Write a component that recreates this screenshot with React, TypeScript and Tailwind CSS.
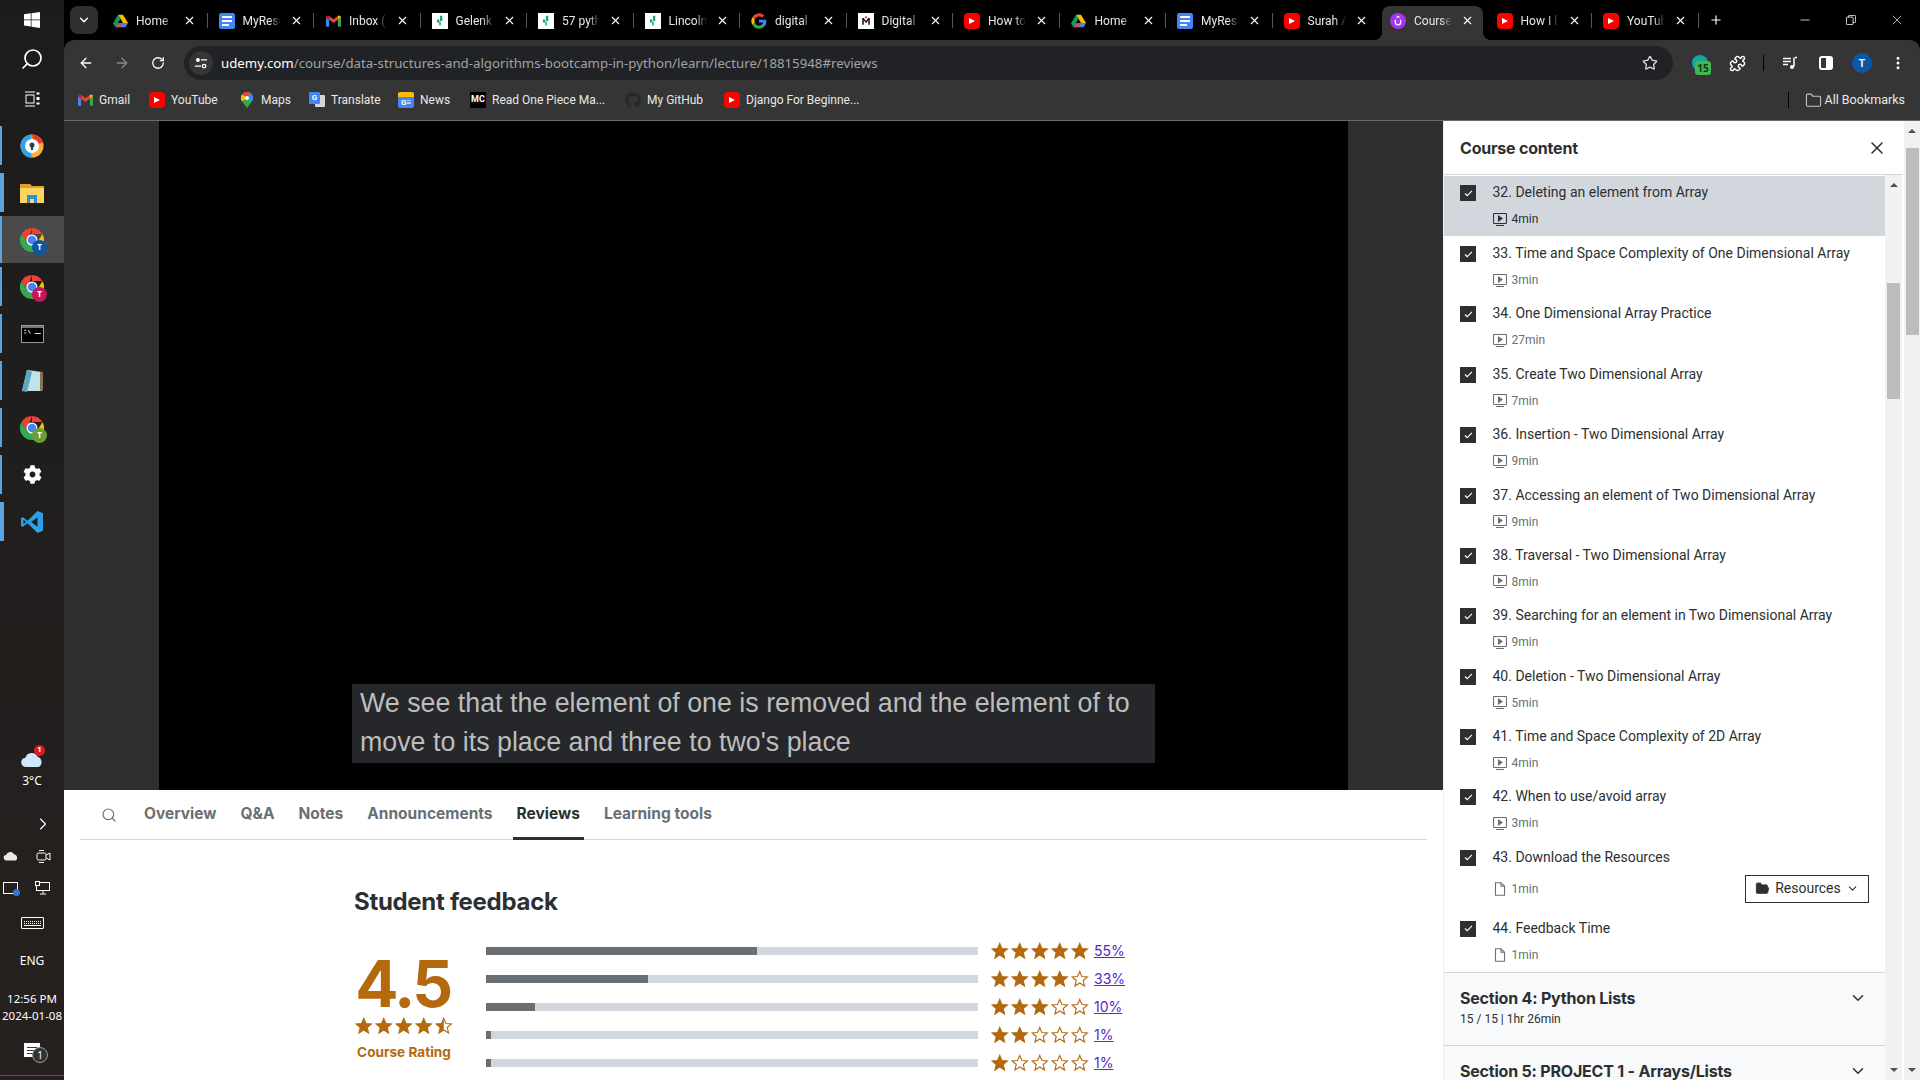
import { ArrowLeft, ArrowRight, ChevronDown, ChevronRight, EllipsisVertical, Folder, FolderOpen, Minus, Plus, Puzzle, RotateCw, Search, Star, X } from 'lucide-react';
import { FaCog, FaGithub } from 'react-icons/fa';

const DriveIcon = () => (
  <svg viewBox="0 0 24 22" className="h-[14px] w-[15px]">
    <path d="M8 1h8l8 13h-8z" fill="#fbbc04" />
    <path d="M8 1 0 15l4 6 8-14z" fill="#0f9d58" />
    <path d="M4 21h16l4-7H8z" fill="#4285f4" />
    <path d="M4 21l4-7h8l-4 7z" fill="#ea4335" opacity="0.8" />
  </svg>
);

const DocsIcon = () => (
  <div className="flex h-[16px] w-[16px] flex-col justify-center gap-[2px] rounded-[2px] bg-[#4285f4] px-[3px]">
    <div className="h-[2px] bg-white" />
    <div className="h-[2px] bg-white" />
    <div className="h-[2px] w-[7px] bg-white" />
  </div>
);

const GmailIcon = () => (
  <svg viewBox="0 0 24 18" className="h-[12px] w-[15px]">
    <path d="M0 3v13a2 2 0 0 0 2 2h3V7z" fill="#4285f4" />
    <path d="M24 3v13a2 2 0 0 1-2 2h-3V7z" fill="#34a853" />
    <path d="M5 7 12 12l7-5V1l-7 5-7-5z" fill="#ea4335" />
    <path d="M0 3a3 3 0 0 1 5-2v6L0 3z" fill="#c5221f" />
    <path d="M24 3a3 3 0 0 0-5-2v6l5-4z" fill="#fbbc04" />
  </svg>
);

const SheetIcon = () => (
  <div className="flex h-[16px] w-[16px] items-center justify-center bg-white">
    <svg viewBox="0 0 16 16" className="h-[12px] w-[12px]">
      <path d="M8 1h3v7H8zM4 6h3v4H4zM7 9h2v5H7z" fill="#10a37f" />
    </svg>
  </div>
);

const GoogleIcon = () => (
  <svg viewBox="0 0 24 24" className="h-[16px] w-[16px]">
    <path d="M23 12.3c0-.8-.1-1.6-.2-2.3H12v4.4h6.2a5.3 5.3 0 0 1-2.3 3.4v2.9h3.7c2.2-2 3.4-5 3.4-8.4z" fill="#4285f4" />
    <path d="M12 23.5c3.1 0 5.700-1 7.600-2.800l-3.700-2.900c-1 .7-2.300 1.100-3.900 1.100-3 0-5.500-2-6.400-4.700H1.800v3a11.500 11.500 0 0 0 10.200 6.300z" fill="#34a853" />
    <path d="M5.600 14.200a7 7 0 0 1 0-4.400v-3H1.800a11.500 11.500 0 0 0 0 10.400z" fill="#fbbc04" />
    <path d="M12 5.100c1.700 0 3.200.6 4.400 1.700l3.300-3.300A11.500 11.500 0 0 0 1.800 6.800l3.800 3C6.500 7.100 9 5.100 12 5.100z" fill="#ea4335" />
  </svg>
);

const DigitalIcon = () => (
  <div className="flex h-[16px] w-[16px] items-center justify-center bg-white">
    <svg viewBox="0 0 16 16" className="h-[12px] w-[12px]">
      <path d="M3 4h2l3 4 3-4h2v9h-2V7L8 11 5 7v6H3z" fill="#111" />
      <circle cx="8" cy="3" r="1.500" fill="#d33" />
    </svg>
  </div>
);

const YoutubeIcon = () => (
  <div className="flex h-[16px] w-[16px] items-center justify-center rounded-[4px] bg-[#ff0000]">
    <div className="h-0 w-0 border-y-[3.500px] border-l-[6px] border-y-transparent border-l-white" />
  </div>
);

const UdemyIcon = () => (
  <div className="flex h-[16px] w-[16px] items-center justify-center rounded-full bg-[#a435f0]">
    <svg viewBox="0 0 16 16" className="h-[14px] w-[14px]">
      <path d="M5 6.500v3a3 3 0 0 0 6 0v-3" fill="none" stroke="white" strokeWidth="1.500" />
      <path d="M8 2 11 4H5z" fill="white" />
    </svg>
  </div>
);

type BrowserTab = { icon: React.ReactNode; title: string; active?: boolean };

const tabs: BrowserTab[] = [
  { icon: <DriveIcon />, title: 'Home' },
  { icon: <DocsIcon />, title: 'MyResume' },
  { icon: <GmailIcon />, title: 'Inbox (1' },
  { icon: <SheetIcon />, title: 'Gelenk' },
  { icon: <SheetIcon />, title: '57 python' },
  { icon: <SheetIcon />, title: 'Lincoln' },
  { icon: <GoogleIcon />, title: 'digital' },
  { icon: <DigitalIcon />, title: 'Digital' },
  { icon: <YoutubeIcon />, title: 'How to' },
  { icon: <DriveIcon />, title: 'Home' },
  { icon: <DocsIcon />, title: 'MyResume' },
  { icon: <YoutubeIcon />, title: 'Surah A' },
  { icon: <UdemyIcon />, title: 'Course', active: true },
  { icon: <YoutubeIcon />, title: 'How I l' },
  { icon: <YoutubeIcon />, title: 'YouTube' },
];

const TabStrip = () => (
  <div className="flex h-[40px] items-stretch bg-black font-['Roboto',sans-serif] text-[12px] text-[#e8e8e8]">
    <div className="ml-[6px] mr-[3px] mt-[6px] flex h-[28px] w-[28px] items-center justify-center rounded-[8px] bg-[#2f2f2f]">
      <ChevronDown size={14} strokeWidth={2.5} className="text-white" />
    </div>
    {tabs.map((tab, i) => (
      <div key={i} className="relative flex w-[106.5px] items-center pl-[11px] pt-[1px]">
        {tab.active && (
          <>
            <div className="absolute inset-x-[3px] bottom-0 top-[6px] rounded-t-[8px] bg-[#353535]" />
            <div className="absolute bottom-0 left-[-5px] h-[8px] w-[8px] bg-[radial-gradient(circle_at_0_0,#000_8px,#353535_8px)]" />
            <div className="absolute bottom-0 right-[-5px] h-[8px] w-[8px] bg-[radial-gradient(circle_at_100%_0,#000_8px,#353535_8px)]" />
          </>
        )}
        <div className="relative flex w-[16px] justify-center">{tab.icon}</div>
        <div className="relative ml-[8px] w-[38px] overflow-hidden whitespace-nowrap [mask-image:linear-gradient(to_right,black_70%,transparent)]">
          {tab.title}
        </div>
        <X size={13} strokeWidth={2} className="relative ml-[9px] text-white" />
        {!tab.active && i !== 11 && (
          <div className="absolute right-0 top-[13px] h-[15px] w-px bg-[#555]" />
        )}
      </div>
    ))}
    <div className="ml-[10px] flex items-center">
      <Plus size={14} strokeWidth={2} className="text-white" />
    </div>
    <div className="ml-auto flex">
      <div className="flex w-[46px] items-center justify-center">
        <Minus size={14} strokeWidth={1.3} className="text-white" />
      </div>
      <div className="flex w-[46px] items-center justify-center">
        <svg viewBox="0 0 12 12" className="h-[10px] w-[10px]" fill="none" stroke="white" strokeWidth="1">
          <rect x="0.500" y="2.500" width="8" height="9" rx="1" />
          <path d="M3 2.500V1.500a1 1 0 0 1 1-1h6.500a1 1 0 0 1 1 1V8a1 1 0 0 1-1 1H8.500" />
        </svg>
      </div>
      <div className="flex w-[46px] items-center justify-center">
        <X size={16} strokeWidth={1} className="text-white" />
      </div>
    </div>
  </div>
);

const Toolbar = () => (
  <div className="flex h-[40px] items-center rounded-t-[10px] bg-[#353535] pl-[4px] pt-[6px]">
    <div className="flex w-[36px] justify-center">
      <ArrowLeft size={16} strokeWidth={2} className="text-white" />
    </div>
    <div className="flex w-[36px] justify-center">
      <ArrowRight size={16} strokeWidth={2} className="text-[#8a8a8a]" />
    </div>
    <div className="flex w-[36px] justify-center">
      <RotateCw size={14} strokeWidth={2.2} className="text-white" />
    </div>
    <div className="relative ml-[8px] flex h-[34px] w-[1489px] items-center rounded-full bg-[#212225] pl-[5px] font-['Noto_Sans',sans-serif] text-[13.250px]">
      <div className="flex h-[24px] w-[24px] items-center justify-center rounded-full bg-[#353535]">
        <svg viewBox="0 0 16 16" className="h-[14px] w-[14px]" fill="none" stroke="white" strokeWidth="1.500">
          <circle cx="4.500" cy="4.500" r="1.500" fill="white" />
          <path d="M8 4.500h7M1 11.500h7" />
          <circle cx="11.500" cy="11.500" r="2" />
        </svg>
      </div>
      <span className="ml-[8px] mt-px text-white">udemy.com</span>
      <span className="mt-px text-[#a0a3a7]">/course/data-structures-and-algorithms-bootcamp-in-python/learn/lecture/18815948#reviews</span>
      <Star size={16} strokeWidth={2} className="absolute right-[15px] text-[#dadada]" />
    </div>
    <div className="ml-[9px] flex w-[36px] justify-center">
      <div className="relative h-[16px] w-[16px] rounded-full bg-[#13a89e]">
        <div className="absolute left-[3px] top-[6px] flex h-[14px] w-[16px] items-center justify-center rounded-[3px] bg-[#3fb950] font-['Noto_Sans',sans-serif] text-[10px] font-bold text-[#12361a]">15</div>
      </div>
    </div>
    <div className="ml-px flex w-[36px] justify-center">
      <Puzzle size={17} strokeWidth={2} className="text-white" />
    </div>
    <div className="ml-[8px] mr-[8px] h-[16px] w-[1px] bg-black" />
    <div className="flex w-[36px] justify-center">
      <svg viewBox="0 0 16 16" className="h-[16px] w-[16px]" fill="none" stroke="white" strokeWidth="1.500">
        <path d="M1 3.500h8M1 6.500h8M1 9.500h5" />
        <path d="M13 2.500h2M12 2.500v9" />
        <circle cx="10" cy="12" r="2" fill="white" stroke="none" />
      </svg>
    </div>
    <div className="flex w-[36px] justify-center">
      <div className="flex h-[14px] w-[14px] justify-end rounded-[3px] border-[2px] border-white">
        <div className="h-full w-[5px] bg-white" />
      </div>
    </div>
    <div className="flex w-[36px] justify-center">
      <div className="flex h-[20px] w-[20px] items-center justify-center rounded-full bg-[#0b57a4] font-['Noto_Sans',sans-serif] text-[11px] font-semibold text-white">T</div>
    </div>
    <div className="flex w-[36px] justify-center">
      <EllipsisVertical size={16} strokeWidth={2.5} className="text-white" />
    </div>
  </div>
);

const MapsIcon = () => (
  <svg viewBox="0 0 12 16" className="h-[16px] w-[12px]">
    <path d="M6 0a6 6 0 0 0-5 9.300L6 16l5-6.700A6 6 0 0 0 6 0z" fill="#34a853" />
    <path d="M6 0a6 6 0 0 1 5 9.300L6 6z" fill="#4285f4" />
    <path d="M1 2.500 6 6 1 9.300a6 6 0 0 1 0-6.800z" fill="#fbbc04" />
    <path d="M1.800 1.700A6 6 0 0 1 9 .8L6 6z" fill="#ea4335" />
    <circle cx="6" cy="6" r="2" fill="#fff" />
  </svg>
);

const TranslateIcon = () => (
  <div className="relative h-[16px] w-[16px]">
    <div className="absolute right-0 top-[3px] h-[12px] w-[10px] rounded-[1px] bg-[#d6d6d6]" />
    <div className="absolute left-0 top-0 flex h-[12px] w-[11px] items-center justify-center rounded-[1px] bg-[#4285f4] text-[8px] font-bold text-white">G</div>
  </div>
);

const NewsIcon = () => (
  <div className="flex h-[16px] w-[16px] flex-col overflow-hidden rounded-[2px]">
    <div className="h-[5px] bg-[#fbbc04]" />
    <div className="flex flex-1 items-center justify-center bg-[#4285f4] text-[8px] font-bold leading-none text-white">G≡</div>
  </div>
);

const McIcon = () => (
  <div className="flex h-[16px] w-[16px] items-center justify-center bg-black text-[9px] font-bold text-white">MC</div>
);

const bookmarks: { icon: React.ReactNode; label: string; width: string }[] = [
  { icon: <GmailIcon />, label: 'Gmail', width: 'w-[72px]' },
  { icon: <YoutubeIcon />, label: 'YouTube', width: 'w-[90px]' },
  { icon: <MapsIcon />, label: 'Maps', width: 'w-[70px]' },
  { icon: <TranslateIcon />, label: 'Translate', width: 'w-[89px]' },
  { icon: <NewsIcon />, label: 'News', width: 'w-[72px]' },
  { icon: <McIcon />, label: 'Read One Piece Ma...', width: 'w-[155px]' },
  { icon: <FaGithub size={16} className="text-[#25282b]" />, label: 'My GitHub', width: 'w-[99px]' },
  { icon: <YoutubeIcon />, label: 'Django For Beginne...', width: 'w-[140px]' },
];

const BookmarksBar = () => (
  <div className="flex h-[40px] items-center bg-[#353535] pl-[13px] font-['Roboto',sans-serif] text-[12px] text-[#e8e8e8]">
    {bookmarks.map((b) => (
      <div key={b.label} className={`flex shrink-0 items-center gap-[6px] ${b.width}`}>
        <div className="flex w-[16px] justify-center">{b.icon}</div>
        <span className="whitespace-nowrap">{b.label}</span>
      </div>
    ))}
    <div className="ml-auto mr-[15px] flex items-center">
      <div className="mr-[16px] h-[16px] w-[1px] bg-black" />
      <Folder size={17} strokeWidth={1.5} className="mr-[3px] text-[#c8c8c8]" />
      <span className="text-[12.500px]">All Bookmarks</span>
    </div>
  </div>
);

const ChromeIcon = ({ badge }: { badge: string }) => (
  <div className="relative h-[24px] w-[24px]">
    <svg viewBox="0 0 24 24" className="h-[24px] w-[24px]">
      <path d="M12 0a12 12 0 0 1 10.400 6H12z" fill="#ea4335" />
      <path d="M12 0A12 12 0 0 0 1.600 6L7 15z" fill="#ea4335" />
      <path d="M22.400 6A12 12 0 0 1 12 24l5-9z" fill="#fbbc04" />
      <path d="M1.600 6A12 12 0 0 0 12 24l5-9H7z" fill="#34a853" />
      <circle cx="12" cy="12" r="5.500" fill="#fff" />
      <circle cx="12" cy="12" r="4.300" fill="#4285f4" />
    </svg>
    <div
      className="absolute -bottom-[3px] -right-[3px] flex h-[15px] w-[15px] items-center justify-center rounded-full font-['Noto_Sans',sans-serif] text-[8px] font-bold text-white"
      style={{ backgroundColor: badge }}
    >
      T
    </div>
  </div>
);

const AvastIcon = () => (
  <svg viewBox="0 0 24 24" className="h-[24px] w-[24px]">
    <circle cx="12" cy="12" r="11.500" fill="#f9b233" />
    <path d="M12 .5a11.500 11.500 0 0 1 11 8L14 11z" fill="#e8352e" />
    <path d="M.5 12A11.500 11.500 0 0 1 12 .5L9 12l3 11.500A11.500 11.500 0 0 1 .5 12z" fill="#2aa3e8" />
    <circle cx="12" cy="12" r="7" fill="#fff" />
    <circle cx="12" cy="11" r="2.500" fill="#2b3a55" />
    <path d="M11 12h2v4h-2z" fill="#2b3a55" />
  </svg>
);

const FolderIcon = () => (
  <svg viewBox="0 0 24 20" className="h-[20px] w-[24px]">
    <path d="M0 1h10l2 2h12v2H0z" fill="#e2a21d" />
    <path d="M0 5h24v15H0z" fill="#fcd462" />
    <path d="M7 12h10v8h-3v-4h-4v4H7z" fill="#2e8cd8" />
  </svg>
);

const CmdIcon = () => (
  <div className="h-[18px] w-[23px] border border-[#9a9a9a] bg-black">
    <div className="h-[2px] bg-[#777]" />
    <svg viewBox="0 0 20 12" className="h-[13px] w-[21px]" fill="none" stroke="#ddd" strokeWidth="1">
      <path d="M2 2h2M2 4.500h2M6 2l2 3M12 5h6" />
    </svg>
  </div>
);

const NotepadIcon = () => (
  <svg viewBox="0 0 24 24" className="h-[24px] w-[24px]">
    <path d="M7 1 22 3v19H2z" fill="#bfe3ea" />
    <path d="M7 1 2 22l5 1 5-20z" fill="#5ea7c4" />
    <path d="M20 3h3v18l-3 1z" fill="#8a7350" />
  </svg>
);

const VscodeIcon = () => (
  <svg viewBox="0 0 24 24" className="h-[24px] w-[24px]">
    <path d="M17.500 1 7.500 10.700 3 7.300 1 8.300v7.400l2 1 4.500-3.400L17.500 23 23 20.800V3.200zM17.500 7.300v9.400L11.300 12z M3.500 9.700 6 12l-2.500 2.300z" fill="#2d9fe6" fillRule="evenodd" />
  </svg>
);

const WindowsIcon = () => (
  <svg viewBox="0 0 16 16" className="h-[16px] w-[16px]" fill="white">
    <path d="M0 2.300 6.800 1.300v6.200H0zM7.500 1.200 16 0v7.500H7.500zM0 8.200h6.800v6.300L0 13.600zM7.500 8.200H16V16l-8.500-1.200z" />
  </svg>
);

const TaskViewIcon = () => (
  <svg viewBox="0 0 16 16" className="h-[16px] w-[16px]" fill="none" stroke="white" strokeWidth="1">
    <path d="M1 1h10M1 15h10" />
    <rect x="2" y="4" width="8" height="8" />
    <rect x="13" y="2" width="2" height="1" />
    <rect x="13" y="6.500" width="2" height="2" fill="white" />
    <rect x="13" y="12" width="2" height="1" />
  </svg>
);

const apps: { icon: React.ReactNode; indicator: string; active?: boolean }[] = [
  { icon: <AvastIcon />, indicator: 'w-[2px]' },
  { icon: <FolderIcon />, indicator: 'w-[4px]' },
  { icon: <ChromeIcon badge="#0b57a4" />, indicator: 'w-[2px]', active: true },
  { icon: <ChromeIcon badge="#c2185b" />, indicator: 'w-[2px]' },
  { icon: <CmdIcon />, indicator: 'w-[2px]' },
  { icon: <NotepadIcon />, indicator: 'w-[2px]' },
  { icon: <ChromeIcon badge="#689f38" />, indicator: 'w-[2px]' },
  { icon: <FaCog size={19} className="text-white" />, indicator: 'w-[2px]' },
  { icon: <VscodeIcon />, indicator: 'w-[4px]' },
];

const Taskbar = () => (
  <aside className="flex h-full w-[64px] shrink-0 flex-col bg-gradient-to-b from-[#1c1c1c] to-[#26211f] font-['Noto_Sans',sans-serif] text-[12px] text-white">
    <div className="flex h-[40px] items-center justify-center">
      <WindowsIcon />
    </div>
    <div className="flex h-[38px] items-center justify-center">
      <Search size={24} strokeWidth={1.7} className="-scale-x-100 text-white" />
    </div>
    <div className="mb-[3px] flex h-[41px] items-center justify-center">
      <TaskViewIcon />
    </div>
    {apps.map((app, i) => (
      <div key={i} className={`relative flex h-[47px] items-center justify-center ${app.active ? 'bg-[#4a4a4a]' : ''}`}>
        <div className={`absolute left-0 bg-[#5ba4e0] ${app.indicator} ${app.active ? 'inset-y-0' : 'inset-y-[4px]'}`} />
        {app.icon}
      </div>
    ))}
    <div className="mt-auto flex flex-col items-center">
      <div className="relative flex h-[20px] w-[24px] items-end justify-center">
        <svg viewBox="0 0 24 16" className="h-[15px] w-[24px]">
          <path d="M6 16a5 5 0 0 1-1-10 7 7 0 0 1 13-1 6 6 0 0 1 1 11z" fill="#cfe6fb" />
        </svg>
        <div className="absolute -right-[1px] -top-[2px] flex h-[11px] w-[11px] items-center justify-center rounded-full bg-[#d32020] text-[7.500px] font-bold">1</div>
      </div>
      <div className="mt-[5px] leading-[18px]">3°C</div>
      <div className="mt-[24px] flex w-full justify-end pr-[11px]">
        <ChevronRight size={20} strokeWidth={1.3} className="text-white" />
      </div>
      <div className="mt-[14px] flex w-full items-center justify-between px-[3px]">
        <svg viewBox="0 0 18 10" className="h-[10px] w-[16px]" fill="#e8e8e8">
          <path d="M4 10a3 3 0 0 1-.500-6 5 5 0 0 1 9-1 4 4 0 0 1 2 7z" />
        </svg>
        <svg viewBox="0 0 16 16" className="mr-[10px] h-[16px] w-[16px]" fill="none" stroke="white" strokeWidth="1">
          <rect x="2" y="5" width="9" height="7" rx="1.500" />
          <path d="M11 7l4-2v7l-4-2M4 2.500h5M4 14.500h5" />
        </svg>
      </div>
      <div className="mt-[17px] flex w-full items-center justify-between pl-[3px] pr-[13px]">
        <div className="relative h-[12px] w-[15px] border border-white">
          <div className="absolute -bottom-[3px] -right-[3px] h-[7px] w-[7px] rounded-full bg-[#2a7bd3]" />
        </div>
        <svg viewBox="0 0 16 14" className="h-[14px] w-[16px]" fill="none" stroke="white" strokeWidth="1">
          <rect x="1.500" y="1.500" width="13" height="8" />
          <rect x="0.500" y="0.500" width="4" height="4" fill="#222" />
          <path d="M8 9.500v3M5 13h6" />
        </svg>
      </div>
      <div className="mt-[22.500px] flex h-[12px] w-[23px] flex-col justify-center gap-[1px] rounded-[1px] border border-white px-[2px]">
        <div className="h-px border-t border-dotted border-white" />
        <div className="h-px border-t border-dotted border-white" />
        <div className="h-px bg-white" />
      </div>
      <div className="mt-[22.500px] leading-[18px]">ENG</div>
      <div className="mt-[20.500px] whitespace-nowrap text-center text-[11.500px] leading-[17px]">
        12:56 PM
        <br />
        2024-01-08
      </div>
      <div className="relative mb-[18px] mt-[19px] flex h-[14px] w-[16px] flex-col justify-center gap-[2px] bg-white px-[3px]">
        <div className="h-px bg-[#333]" />
        <div className="h-px bg-[#333]" />
        <div className="h-px w-[6px] bg-[#333]" />
        <div className="absolute -bottom-[6px] -right-[8px] flex h-[16px] w-[16px] items-center justify-center rounded-full border border-[#999] bg-[#333] text-[10px]">1</div>
      </div>
      <div className="mb-[4px] h-px w-full bg-[#555]" />
    </div>
  </aside>
);

const VideoIcon = ({ dark }: { dark: boolean }) => (
  <svg viewBox="0 0 14 13" className={`h-[13px] w-[14px] ${dark ? 'text-[#2d2f31]' : 'text-[#6a6f73]'}`} fill="none" stroke="currentColor" strokeWidth="1.100">
    <rect x="0.500" y="0.500" width="13" height="10" rx="1" />
    <path d="M3 12.500h8" />
    <path d="M5.500 3v5l3.500-2.500z" fill="currentColor" />
  </svg>
);

const FileIcon = () => (
  <svg viewBox="0 0 12 14" className="h-[14px] w-[12px] text-[#6a6f73]" fill="none" stroke="currentColor" strokeWidth="1.100">
    <path d="M1.500.8h5.500l3.500 3.500v8.900h-9z" />
    <path d="M7 .8v3.500h3.500" />
  </svg>
);

type Lecture = { title: string; time: string; file?: boolean; selected?: boolean; resources?: boolean };

const lectures: Lecture[] = [
  { title: '32. Deleting an element from Array', time: '4min', selected: true },
  { title: '33. Time and Space Complexity of One Dimensional Array', time: '3min' },
  { title: '34. One Dimensional Array Practice', time: '27min' },
  { title: '35. Create Two Dimensional Array', time: '7min' },
  { title: '36. Insertion - Two Dimensional Array', time: '9min' },
  { title: '37. Accessing an element of Two Dimensional Array', time: '9min' },
  { title: '38. Traversal - Two Dimensional Array', time: '8min' },
  { title: '39. Searching for an element in Two Dimensional Array', time: '9min' },
  { title: '40. Deletion - Two Dimensional Array', time: '5min' },
  { title: '41. Time and Space Complexity of 2D Array', time: '4min' },
  { title: '42. When to use/avoid array', time: '3min' },
  { title: '43. Download the Resources', time: '1min', file: true, resources: true },
  { title: '44. Feedback Time', time: '1min', file: true },
];

const LectureRow = ({ lecture }: { lecture: Lecture }) => (
  <div className={`flex shrink-0 pl-[16px] ${lecture.resources ? 'h-[71px]' : lecture.selected ? 'mb-px h-[60px] bg-[#d1d7dc]' : 'h-[60.380px]'}`}>
    <div className="mt-[9px] flex h-[16px] w-[16px] shrink-0 items-center justify-center bg-[#2d2f31]">
      <svg viewBox="0 0 10 8" className="h-[7px] w-[9px]" fill="none" stroke="white" strokeWidth="1.300">
        <path d="M1 4l2.500 2.500L9 1" />
      </svg>
    </div>
    <div className="ml-[16.500px] flex-1 pt-[6px] font-['Roboto',sans-serif]">
      <div className="text-[14px] leading-[20px] text-[#2d2f31]">{lecture.title}</div>
      <div className={`flex items-center ${lecture.resources ? 'mt-[8px] h-[28px] pr-[16px]' : 'mt-[7px] h-[20px]'}`}>
        <div className="flex w-[19px] justify-start">{lecture.file ? <div className="pl-px"><FileIcon /></div> : <VideoIcon dark={!!lecture.selected} />}</div>
        <span className={`text-[12px] ${lecture.selected ? 'text-[#2d2f31]' : 'text-[#6a6f73]'}`}>{lecture.time}</span>
        {lecture.resources && (
          <div className="ml-auto flex h-[28px] w-[124px] items-center justify-center gap-[5px] border border-[#2d2f31] text-[14px] text-[#2d2f31]">
            <FolderOpen size={15} fill="#2d2f31" stroke="#2d2f31" strokeWidth={1} />
            Resources
            <ChevronDown size={13} strokeWidth={2} />
          </div>
        )}
      </div>
    </div>
  </div>
);

const SectionRow = ({ title, meta }: { title: string; meta?: string }) => (
  <div className="relative h-[73px] shrink-0 border-t border-[#d1d7dc] bg-[#f7f9fa] px-[16px] pt-[13px]">
    <div className="text-[16px] font-bold leading-[24px] tracking-[-0.2px] text-[#2d2f31]">{title}</div>
    {meta && <div className="mt-px font-['Roboto',sans-serif] text-[12px] leading-[16px] text-[#2d2f31]">{meta}</div>}
    <ChevronDown size={18} strokeWidth={2} className="absolute right-[18px] top-[16px] text-[#2d2f31]" />
  </div>
);

const ArrowUp = () => <div className="h-0 w-0 border-x-[4px] border-b-[4px] border-x-transparent border-b-[#505050]" />;
const ArrowDown = () => <div className="h-0 w-0 border-x-[4px] border-t-[4px] border-x-transparent border-t-[#505050]" />;

const Sidebar = () => (
  <div className="flex h-full w-[460px] shrink-0 flex-col border-l border-[#f0f0f0] bg-white font-['Inter',sans-serif]">
    <div className="flex h-[54px] shrink-0 items-center justify-between border-b border-[#d1d7dc] pl-[16px] pr-[16px]">
      <span className="text-[16px] font-bold tracking-[-0.2px] text-[#2d2f31]">Course content</span>
      <X size={20} strokeWidth={1.8} className="text-[#2d2f31]" />
    </div>
    <div className="flex min-h-0 flex-1">
      <div className="flex w-[441px] flex-col overflow-hidden pt-px">
        {lectures.map((l) => (
          <LectureRow key={l.title} lecture={l} />
        ))}
        <SectionRow title="Section 4: Python Lists" meta="15 / 15 | 1hr 26min" />
        <SectionRow title="Section 5: PROJECT 1 - Arrays/Lists" />
      </div>
      <div className="flex w-[17px] flex-col items-center bg-[#f1f1f1] pb-[8px] pt-[8px]">
        <ArrowUp />
        <div className="mt-[96px] h-[116px] w-[13px] bg-[#bcbcbc]" />
        <div className="mt-auto">
          <ArrowDown />
        </div>
      </div>
    </div>
  </div>
);

const OuterScrollbar = () => (
  <div className="flex w-[17px] shrink-0 flex-col items-center border-l border-white bg-[#f1f1f1] pb-[8px] pt-[8px]">
    <ArrowUp />
    <div className="mt-[15px] h-[187px] w-[13px] bg-[#bcbcbc]" />
    <div className="mt-auto">
      <ArrowDown />
    </div>
  </div>
);

const StarIcon = ({ kind }: { kind: 'full' | 'half' | 'empty' }) => {
  const points = '12,2 15,9 22.500,9.600 16.800,14.400 18.600,22 12,17.800 5.400,22 7.200,14.400 1.500,9.600 9,9';
  return (
    <svg viewBox="0 0 24 24" className="h-[17.500px] w-[17.500px]">
      <polygon points={points} fill={kind === 'full' ? '#b4690e' : 'none'} stroke="#b4690e" strokeWidth="1.500" />
      {kind === 'half' && <polygon points="12,2 12,17.800 5.400,22 7.200,14.400 1.500,9.600 9,9" fill="#b4690e" />}
    </svg>
  );
};

const ratings = [
  { pct: 55, stars: 5 },
  { pct: 33, stars: 4 },
  { pct: 10, stars: 3 },
  { pct: 1, stars: 2 },
  { pct: 1, stars: 1 },
];

const Reviews = () => (
  <div className="pl-[290px] font-['Inter',sans-serif]">
    <h2 className="mt-[46px] text-[24px] font-bold leading-[32px] tracking-[-0.3px] text-[#2d2f31]">Student feedback</h2>
    <div className="mt-[19px] flex">
      <div className="w-[132px] shrink-0 pl-[1px]">
        <div className="w-[98px] text-center">
          <div className="-ml-[2px] mt-[23px] text-[64px] font-bold leading-[48px] tracking-[-2.500px] text-[#b4690e]">4.5</div>
          <div className="mt-[9px] flex h-[18px] justify-center gap-[2.500px]">
            {[0, 1, 2, 3].map((i) => (
              <StarIcon key={i} kind="full" />
            ))}
            <StarIcon kind="half" />
          </div>
          <div className="mt-[7px] whitespace-nowrap text-[13.600px] font-bold leading-[20px] text-[#b4690e]">Course Rating</div>
        </div>
      </div>
      <div className="flex flex-col">
        {ratings.map((r) => (
          <div key={r.stars} className="flex h-[28px] items-center">
            <div className="h-[8px] w-[492px] bg-[#d1d7dc]">
              <div className="h-full bg-[#6a6f73]" style={{ width: `${r.pct}%` }} />
            </div>
            <div className="ml-[13px] flex gap-[2.500px]">
              {[1, 2, 3, 4, 5].map((n) => (
                <StarIcon key={n} kind={n <= r.stars ? 'full' : 'empty'} />
              ))}
            </div>
            <a className="-mt-[2px] ml-[5.500px] text-[14px] text-[#5624d0] underline">{r.pct}%</a>
          </div>
        ))}
      </div>
    </div>
  </div>
);

const lessonTabs = ['Overview', 'Q&A', 'Notes', 'Announcements', 'Reviews', 'Learning tools'];

const LessonTabs = () => (
  <div className="mx-[16px] flex h-[50px] shrink-0 items-stretch gap-[16px] border-b border-[#d1d7dc] pl-[13px] font-['Inter',sans-serif]">
    <div className="flex w-[31px] items-center justify-center">
      <Search size={16} strokeWidth={1.8} className="text-[#6a6f73]" />
    </div>
    {lessonTabs.map((t) => (
      <div
        key={t}
        className={`-mb-px flex items-center whitespace-nowrap border-b-[3px] px-[4px] pt-[1px] text-[15.500px] font-bold ${t === 'Reviews' ? 'border-[#2d2f31] text-[#2d2f31]' : 'border-transparent text-[#6a6f73]'}`}
      >
        {t}
      </div>
    ))}
  </div>
);

const VideoStage = () => (
  <div className="flex h-[669px] shrink-0 justify-center bg-[#2d2f31]">
    <div className="flex w-[1189px] flex-col items-center justify-end bg-black pb-[27px]">
      <div className="w-[803px] bg-[#25272a] px-[8px] pb-[2px] font-['Liberation_Sans',sans-serif] text-[26.800px] leading-[38.500px] text-[#bdbdbd]">
        We see that the element of one is removed and the element of to move to its place and three to two's place
      </div>
    </div>
  </div>
);

const App = () => {
  return (
    <div className="flex h-[1080px] w-[1920px] overflow-hidden bg-black">
      <Taskbar />
      <div className="flex min-w-0 flex-1 flex-col">
        <TabStrip />
        <Toolbar />
        <BookmarksBar />
        <div className="h-px shrink-0 bg-[#6b6b6b]" />
        <div className="flex min-h-0 flex-1 bg-white">
          <div className="flex w-[1379px] shrink-0 flex-col">
            <VideoStage />
            <LessonTabs />
            <Reviews />
          </div>
          <Sidebar />
          <OuterScrollbar />
        </div>
      </div>
    </div>
  );
};

export default App;
